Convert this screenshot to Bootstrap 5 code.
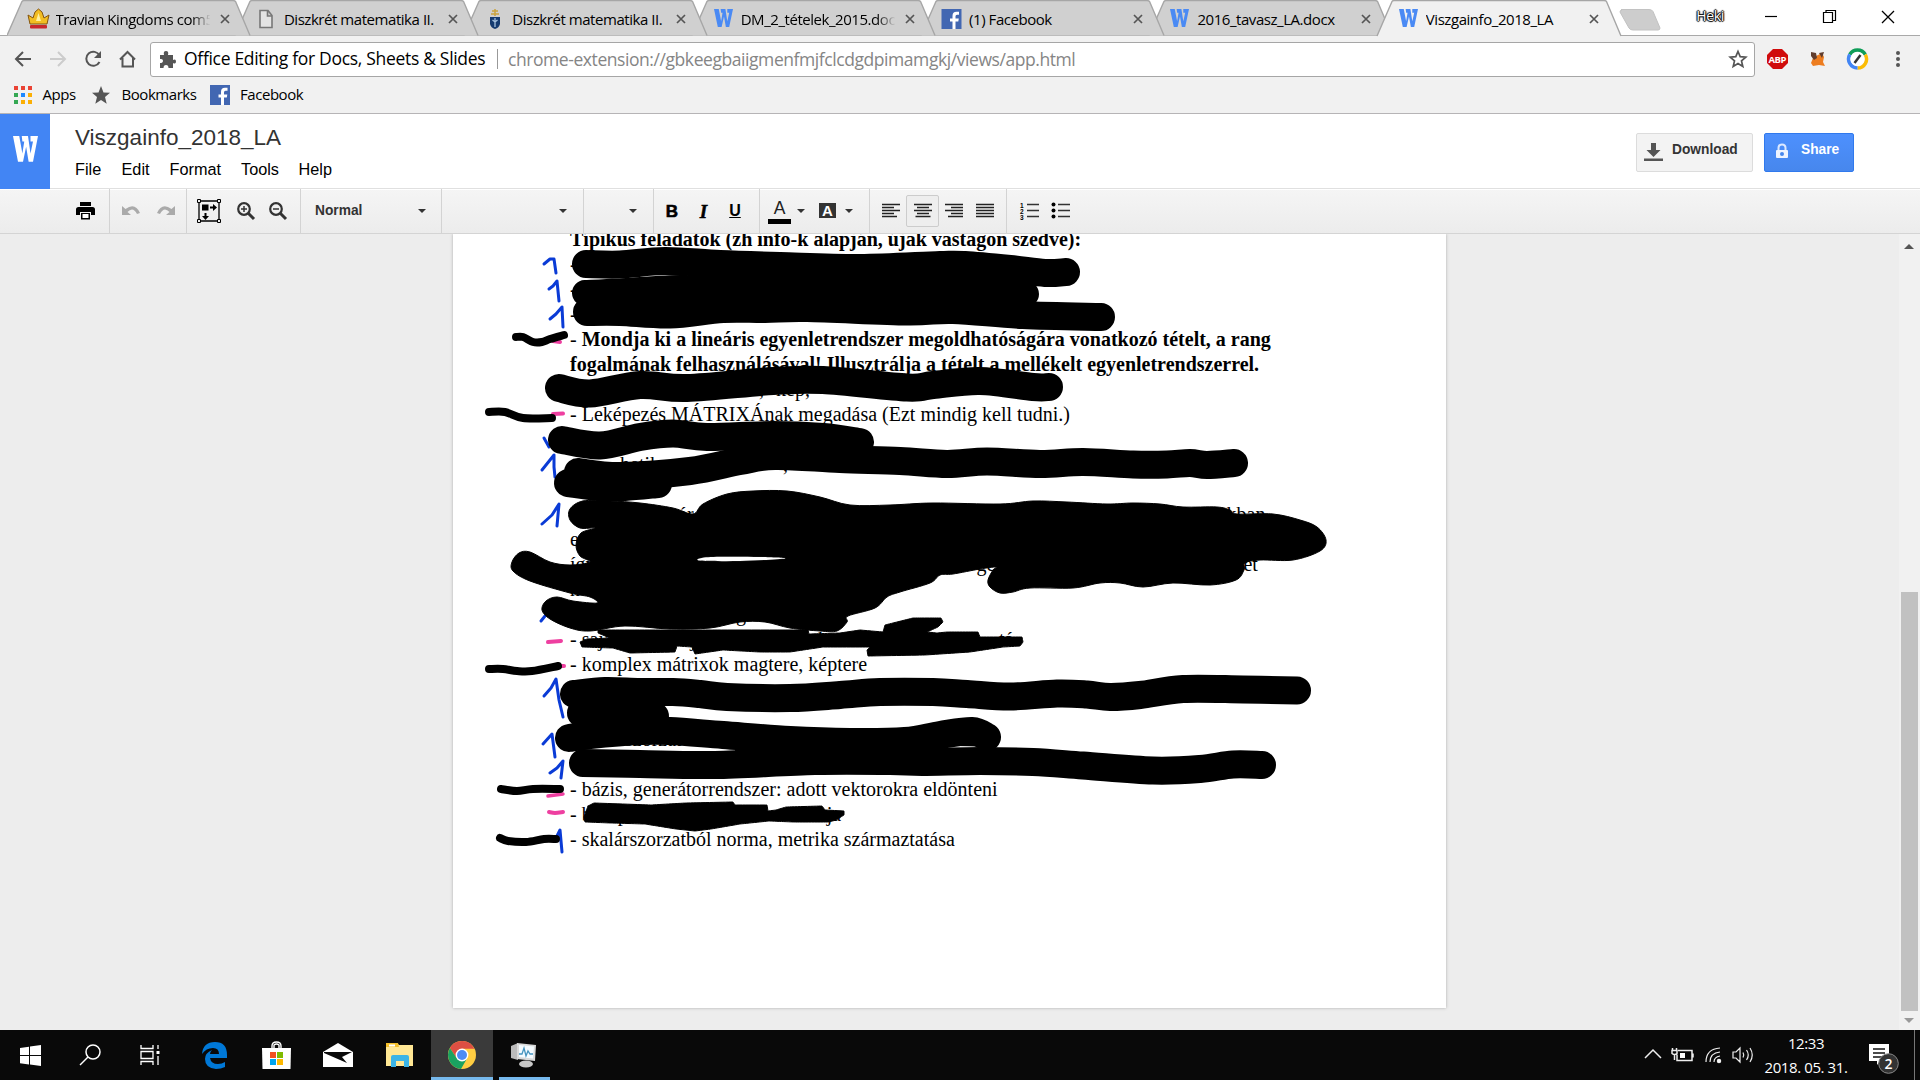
<!DOCTYPE html>
<html lang="en">
<head>
<meta charset="utf-8">
<title>Viszgainfo_2018_LA</title>
<link href="https://cdn.jsdelivr.net/npm/bootstrap@5.3.0/dist/css/bootstrap.min.css" rel="stylesheet">
<style>
html,body{height:1080px;overflow:hidden}
body{font-family:"Open Sans","Noto Sans",sans-serif;color:#000;background:#fff;line-height:1}
svg{display:block;flex:none;overflow:visible}
.tabstrip{height:36px;padding-left:7px;background:#fff;border-bottom:1px solid #a9a9a9;z-index:1}
.btab{width:244.4px;margin-right:-16px;height:36px;padding-left:20.5px;padding-top:1px;font-size:15px;letter-spacing:-.45px;flex:none}
.btab .shape{position:absolute;left:0;top:0;z-index:-1}
.btab .cap{width:156px;margin-left:7px;overflow:hidden;white-space:nowrap;line-height:24px}
.btab .fade-cap{-webkit-mask-image:linear-gradient(90deg,#000 87%,transparent 99%);mask-image:linear-gradient(90deg,#000 87%,transparent 99%)}
.btab .x{margin-left:8px}
.newtab{margin:0 0 0 13px}
.heki{font-size:14px;color:#fff;text-shadow:0 0 1px #000,1px 0 1px #000,-1px 0 1px #000,0 1px 1px #000,0 -1px 1px #000;letter-spacing:-.3px}
.wincontrols{margin-left:auto;padding:0 12px 3px 0}
.navrow{height:46px;background:#f1f1f1;padding:0 12px 0 14px}
.omni{width:1605px;height:35px;border:1px solid #a6a6a6;border-radius:3px;background:#fff;font-size:17.5px;margin-left:14px;padding:0 7px 0 8px}
.omni .o1{width:302px;margin-left:8px;letter-spacing:-.31px;white-space:nowrap}
.omni .o2{border-left:1px solid #999;padding-left:10px;margin-left:11px;color:#858585;line-height:20px;letter-spacing:-.43px;white-space:nowrap}
.marks{height:32px;background:#f1f1f1;border-bottom:1px solid #b6b4b6;font-size:15px;padding:0 0 6px 14px;letter-spacing:-.45px}
.dochead{height:74px;font-family:"Liberation Sans",Arial,sans-serif}
.logo-w{width:50px;height:75px;background:#4285f4;z-index:2;padding-top:22px;padding-left:13px}
.dtitle{font-size:22.5px;color:#333;padding:12px 0 0 25px;line-height:24px;letter-spacing:0}
.dmenu{font-size:16.25px;padding:9px 0 0 25px;line-height:20px}
.dbtn{height:39px;border-radius:2px;font-size:13.75px;font-weight:bold;margin-top:19px;border:1px solid #dcdcdc;background:#f3f3f3;color:#333;line-height:14px;padding-top:9px}
.dshare{background:linear-gradient(#4d90fe,#4787ed);border-color:#3079ed;color:#fff}
.tools{height:46px;border-top:1px solid #e0e0e0;border-bottom:1px solid #d4d4d4;background:linear-gradient(#f5f5f5,#ececec);font-family:"Liberation Sans",Arial,sans-serif;box-shadow:inset 0 1px #fff}
.tg{border-right:1px solid #d3d3d3;height:44px;flex:none}
.caret{width:0;height:0;border:4px solid transparent;border-top-color:#333;border-bottom:0;flex:none}
.ti{width:20px;flex:none;text-align:center}
.pressed{width:33px;height:32px;border:1px solid #ccc;border-radius:2px;background:#eee;margin:0 5px;padding-left:6px}
.work{height:796px;background:#ededed;overflow:hidden}
.sheet{width:993px;height:774px;margin-left:453px;background:#fff;box-shadow:0 0 3px #aaa;padding:0 0 0 117px;font:20px/25px "Liberation Serif","Times New Roman",serif;white-space:nowrap}
.sheet .txt{margin-top:-7px}
.ln{height:25px}
.ln i{display:inline-block;height:1px}
.ink{position:absolute;left:0;top:0;pointer-events:none;z-index:3}
.sbar{width:21px;height:796px;background:#f1f1f1;margin-left:auto;padding:10px 0 7px 5px}
.thumb{width:17px;height:419px;background:#c1c1c1;margin-left:-3px;margin-top:auto;margin-bottom:7px}
.taskbar{height:50px;background:#090909;color:#fff}
.tk{width:62px;height:50px;flex:none}
.tk.on{background:#3a3a3a;box-shadow:inset 0 -3px #76b9ed}
.tk.run{background:linear-gradient(#76b9ed,#76b9ed) 50% 100%/51px 3px no-repeat}
.clock{width:90px;font-size:15px;text-align:center;line-height:24px;letter-spacing:-.4px}
.showdesk{border-left:1px solid #777;width:6px;height:50px}
</style>
<script src="https://cdn.jsdelivr.net/npm/bootstrap@5.3.0/dist/js/bootstrap.bundle.min.js"></script>
</head>
<body>
<svg width="0" height="0" class="position-absolute">
<defs>
<symbol id="tabx" viewBox="0 0 10 10"><path d="M1 1l8 8M9 1l-8 8" stroke="#555" stroke-width="1.7" fill="none"/></symbol>
<symbol id="idle" viewBox="0 0 245 36"><path d="M0 35.5L15 1.5Q15.5.5 17 .5H227Q229 .5 229.5 1.5L244 35.5" fill="#d0d0d0" stroke="#a6a6a6" stroke-width="1.4"/></symbol>
<symbol id="wico" viewBox="0 0 20 20"><path d="M0 0H5L7.5 13 9 4H7.500L7 0H12L14 13 16 4H14L14 0H20L16 19H12.500L10.500 8 8 19H4Z" fill="currentColor"/></symbol>
<symbol id="fb" viewBox="0 0 20 20"><path d="M0 0h20v20H0z" fill="#4267b2"/><path d="M11 20v-7.500H8.500V9.500H11V7q0-4.200 4-4.200h2.500v3H15.500q-1.500 0-1.500 1.500v2.200h3.300l-.5 3H14V20z" fill="#fff"/></symbol>
<symbol id="loupe" viewBox="0 0 20 20"><circle cx="8" cy="8" r="5.800" fill="none" stroke="#333" stroke-width="2.200"/><path d="M12 12l6 6" stroke="#333" stroke-width="3"/><path d="M5 8h6" stroke="#333" stroke-width="1.500"/></symbol>
</defs>
</svg>

<div class="tabstrip d-flex position-relative">
  <div class="btab d-flex align-items-center position-relative"><svg class="shape" width="244" height="36"><use href="#idle"/></svg>
    <svg width="21" height="20"><path d="M2 15L0 6l5 3 2-6 3.500-3L14 3l2 6 5-3-2 9z" fill="#f2bd22" stroke="#84540f"/><path d="M8 12l2.500-8L13 12z" fill="#fff0a0"/><rect x="2" y="16" width="17" height="3.500" rx="1" fill="#c9272c"/></svg><div class="cap fade-cap">Travian Kingdoms com5</div><svg class="x" width="10" height="10"><use href="#tabx"/></svg></div>
  <div class="btab d-flex align-items-center position-relative"><svg class="shape" width="244" height="36"><use href="#idle"/></svg>
    <svg width="21" height="20"><path d="M4 1.500h8l4 5V18.500H4zM11.500 1.500v5.500h5" fill="#e4e4e4" stroke="#777" stroke-width="1.600"/></svg><div class="cap">Diszkrét matematika II.</div><svg class="x" width="10" height="10"><use href="#tabx"/></svg></div>
  <div class="btab d-flex align-items-center position-relative"><svg class="shape" width="244" height="36"><use href="#idle"/></svg>
    <svg width="21" height="20"><path d="M6 8h10v7q-1 4-5 5-4-1-5-5z" fill="#153b70"/><path d="M11 0v7M8 2h6M7 5h8" stroke="#c9a33d" stroke-width="1.500"/><path d="M11 9v9M8.500 11l2.500 2 2.500-2" stroke="#a6c2df" fill="none" stroke-width="1.300"/></svg><div class="cap">Diszkrét matematika II.</div><svg class="x" width="10" height="10"><use href="#tabx"/></svg></div>
  <div class="btab d-flex align-items-center position-relative"><svg class="shape" width="244" height="36"><use href="#idle"/></svg>
    <svg width="21" height="19" color="#4a8af4"><use href="#wico"/></svg><div class="cap fade-cap">DM_2_tételek_2015.docx</div><svg class="x" width="10" height="10"><use href="#tabx"/></svg></div>
  <div class="btab d-flex align-items-center position-relative"><svg class="shape" width="244" height="36"><use href="#idle"/></svg>
    <svg width="21" height="20"><use href="#fb"/></svg><div class="cap">(1) Facebook</div><svg class="x" width="10" height="10"><use href="#tabx"/></svg></div>
  <div class="btab d-flex align-items-center position-relative"><svg class="shape" width="244" height="36"><use href="#idle"/></svg>
    <svg width="21" height="19" color="#4a8af4"><use href="#wico"/></svg><div class="cap">2016_tavasz_LA.docx</div><svg class="x" width="10" height="10"><use href="#tabx"/></svg></div>
  <div class="btab d-flex align-items-center position-relative"><svg class="shape" width="244" height="36"><path d="M0 36L15 1.500Q15.500.5 17 .5H227Q229 .5 229.500 1.500L244 36" fill="#f1f1f1" stroke="#a6a6a6" stroke-width="1.400"/></svg>
    <svg width="21" height="19" color="#4a8af4"><use href="#wico"/></svg><div class="cap">Viszgainfo_2018_LA</div><svg class="x" width="10" height="10" style="margin-left:7px"><use href="#tabx"/></svg></div>
  <svg class="newtab" width="44" height="36"><path d="M2 9.500H30q3 0 4 2L41 28q0 2-2 2H14q-3 0-4-2L1 12q0-2 2-2z" fill="#cdcdcd" stroke="#c2c2c2"/></svg>
  <div class="wincontrols d-flex align-items-center"><span class="heki">Heki</span>
    <svg width="160" height="20" class="ms-4"><path d="M17 10.500h12" stroke="#000" stroke-width="1.200"/><path d="M75.500 6.500h9v10h-9zM78 6V4.500h9.500v10H85" fill="none" stroke="#000" stroke-width="1.200"/><path d="M134 5l12 12M146 5l-12 12" stroke="#000" stroke-width="1.300"/></svg></div>
</div>

<div class="navrow d-flex align-items-center">
  <svg width="122" height="20" fill="none" stroke="#555" stroke-width="2"><path d="M17 10H2M9 3l-7 7 7 7"/><path d="M36 10h15M44 3l7 7-7 7" stroke="#ccc"/><path d="M85.500 6.500A7 7 0 1 0 85.500 13"/><path d="M87 2v7h-7z" fill="#555" stroke="none"/><path d="M106 10.500l7.500-7.500L121 10.500M108.500 9v8.500h10.500V9" /></svg>
  <div class="omni d-flex align-items-center">
    <svg width="17" height="17" fill="#555"><path d="M1 4h4q-1-4 2-4t2 4h5v5q3-1.500 3 1.500T14 12v5H9.500q0-3-2.500-3t-2.500 3H1v-5q3 0 3-2.300T1 8z"/></svg>
    <div class="o1">Office Editing for Docs, Sheets &amp; Slides</div>
    <div class="o2">chrome-extension://gbkeegbaiigmenfmjfclcdgdpimamgkj/views/app.html</div>
    <svg class="ms-auto" width="18" height="18"><path d="M9 1.500l2.200 5.200 5.600.5-4.300 3.700 1.300 5.600L9 13.500l-4.800 3 1.300-5.600L1.200 7.200l5.600-.5z" fill="none" stroke="#555" stroke-width="1.700"/></svg>
  </div>
  <svg class="ms-auto" width="142" height="22">
    <path d="M7 1h9l6 6v8l-6 6H7l-6-6V7z" fill="#d00c0c"/><text x="2.500" y="14.500" font-size="9.500" font-weight="700" fill="#fff" font-family="Open Sans" textLength="18">ABP</text>
    <path d="M46 5l4 3 6-3 2 4-1 5 2 4-6-1-6 1-2-3 2-5z" fill="#ed7d20"/><path d="M45 4l5 1 1 5-3 2-3-4zM53 5l5-1-2 6z" fill="#613d2d"/>
    <g transform="translate(10.500)"><g fill="none" stroke-width="3.500"><path d="M73.300 6.500a9 9 0 0 1 15.500 0" stroke="#0f9d58"/><path d="M88.800 6.500a9 9 0 0 1-7.800 13.500" stroke="#fbbc05"/><path d="M81 20a9 9 0 0 1-7.700-13.500" stroke="#4285f4"/></g><circle cx="81" cy="11" r="7" fill="#fff"/><path d="M78 15l6-8" stroke="#333" stroke-width="2.500"/></g>
    <g fill="#555"><circle cx="132" cy="5" r="2"/><circle cx="132" cy="11" r="2"/><circle cx="132" cy="17" r="2"/></g>
  </svg>
</div>
<div class="marks d-flex align-items-center">
  <svg width="18" height="18"><g fill="#ea4335"><path d="M0 0h4v4H0zM7 0h4v4H7zM14 0h4v4h-4z"/></g><path d="M0 7h4v4H0zM0 14h4v4H0z" fill="#34a853"/><path d="M7 7h4v4H7z" fill="#1e88ff"/><path d="M14 7h4v4h-4zM7 14h4v4H7zM14 14h4v4h-4z" fill="#fbaf05"/></svg>
  <span style="width:60px;padding-left:10.500px">Apps</span>
  <svg width="18" height="18"><path d="M9 0l2.500 6.400 6.500.4-5 4.300 1.700 6.700L9 14l-5.700 3.800L5 11.100 0 6.800l6.500-.4z" fill="#555"/></svg>
  <span style="width:100px;padding-left:11.500px">Bookmarks</span>
  <svg width="20" height="20"><use href="#fb"/></svg><span style="padding-left:10px">Facebook</span>
</div>

<div class="dochead d-flex">
  <div class="logo-w position-relative text-white"><svg width="25" height="27" viewBox="0 0 20 20" preserveAspectRatio="none"><path d="M0 0H5L7.500 13 9 4H7.500L7 0H12L14 13 16 4H14L14 0H20L16 19H12.500L10.500 8 8 19H4Z" fill="#fff"/></svg></div>
  <div><div class="dtitle">Viszgainfo_2018_LA</div>
    <div class="dmenu d-flex"><span style="width:46.500px">File</span><span style="width:48px">Edit</span><span style="width:71.500px">Format</span><span style="width:57.500px">Tools</span><span>Help</span></div></div>
  <div class="dbtn d-flex align-items-start ms-auto" style="width:117px"><svg width="20" height="19" style="margin-left:6px"><path d="M8 0h5v7h4.500l-7 7-7-7H8zM1 15.500h19V18H1z" fill="#555"/></svg><span style="padding-left:9px">Download</span></div>
  <div class="dbtn dshare d-flex align-items-start" style="width:90px;margin-left:11px;margin-right:66px"><svg width="14" height="17" style="margin-left:10px"><path d="M3.500 8V5q0-3.500 3.500-3.500T10.500 5v3" fill="none" stroke="#dce8ff" stroke-width="2"/><rect x="1" y="7" width="12" height="8" rx="1" fill="#eef4ff"/><circle cx="7" cy="11" r="2" fill="#4787ed"/></svg><span style="padding-left:12px">Share</span></div>
</div>

<div class="tools d-flex position-relative">
  <div class="tg d-flex align-items-center" style="width:110px;padding-left:76px"><svg width="19" height="18"><path d="M4 0h11v4H4zM2.500 5h14q2.500 0 2.500 2.500V13h-4v-3H4v3H0V7.500Q0 5 2.500 5zM5 11h9v6.500H5z" fill="#000"/><path d="M6.500 12h6v4h-6z" fill="#fff"/></svg></div>
  <div class="tg d-flex align-items-center" style="width:77px;padding-left:11px;gap:15px"><svg width="20" height="12"><path d="M1 1v9h9L6.500 7Q12 1 16 9l3-1Q14-3 4.500 4z" fill="#aaa"/></svg><svg width="20" height="12"><path d="M19 1v9h-9L13.500 7Q8 1 4 9L1 8Q6-3 15.500 4z" fill="#aaa"/></svg></div>
  <div class="tg d-flex align-items-center" style="width:114px;padding-left:10px;gap:12px"><svg width="24" height="24"><path d="M2 2h20v20H2z" fill="none" stroke="#000" stroke-width="1.300"/><g fill="#eee" stroke="#000"><path d="M.5.5h3v3h-3zM20.500.5h3v3h-3zM.5 20.500h3v3h-3zM20.500 20.500h3v3h-3z"/></g><path d="M5 5.500h6.500v6H5zM13 7.500h3V5l4 3.500-4 3.500V9.500h-3zM7.500 14h2v3H12l-3.500 4L5 17h2.500z"/></svg><svg width="20" height="20" style="margin-left:3px"><use href="#loupe"/><path d="M8 5v6" stroke="#333" stroke-width="1.500"/></svg><svg width="20" height="20"><use href="#loupe"/></svg></div>
  <div class="tg d-flex align-items-center justify-content-between fw-bold" style="width:141px;padding:0 15.500px 0 14px;font-size:13.750px;color:#333"><span>Normal</span><span class="caret"></span></div>
  <div class="tg d-flex align-items-center justify-content-end" style="width:142px;padding-right:16px"><span class="caret"></span></div>
  <div class="tg d-flex align-items-center justify-content-end" style="width:70px;padding-right:16px"><span class="caret"></span></div>
  <div class="tg d-flex align-items-center" style="width:106px;padding-left:8px;gap:11.500px;font-size:17px"><b class="ti" style="-webkit-text-stroke:.6px #000">B</b><b class="ti fst-italic" style="font-family:'Liberation Serif',serif;font-size:19px;-webkit-text-stroke:.5px #000">I</b><b class="ti text-decoration-underline" style="font-size:16px">U</b></div>
  <div class="tg d-flex align-items-center" style="width:110px;padding-left:8px"><span class="text-center" style="width:23px;height:25px;border-bottom:5px solid #000;font-size:17.500px;line-height:19px;color:#222">A</span><span class="caret" style="margin-left:6px"></span><span class="text-center text-white" style="width:17px;height:15px;background:#333;margin:0 9px 2px 14px;font-size:15px;line-height:15px;font-weight:bold">A</span><span class="caret"></span></div>
  <div class="tg d-flex align-items-center" style="width:137px;padding-left:11px"><svg width="20" height="16" stroke="#222" stroke-width="1.600"><path d="M1 1.500h18M1 4.500h12M1 7.500h18M1 10.500h12M1 13.500h15"/></svg><span class="pressed d-flex align-items-center"><svg width="20" height="16" stroke="#222" stroke-width="1.600"><path d="M1 1.500h18M4 4.500h12M1 7.500h18M4 10.500h12M2.500 13.500h15"/></svg></span><svg width="20" height="16" stroke="#222" stroke-width="1.600"><path d="M1 1.500h18M7 4.500h12M1 7.500h18M7 10.500h12M4 13.500h15"/></svg><svg width="20" height="16" style="margin-left:11px" stroke="#222" stroke-width="1.600"><path d="M1 1.500h18M1 4.500h18M1 7.500h18M1 10.500h18M1 13.500h18"/></svg></div>
  <div class="d-flex align-items-center" style="padding-left:13px;gap:11px"><svg width="20" height="18"><path d="M7 2.500h12M7 8.500h12M7 14.500h12" stroke="#333" stroke-width="1.600"/><g font-size="6.500" font-weight="700" font-family="Liberation Sans"><text x="0" y="5.500">1</text><text x="0" y="11.500">2</text><text x="0" y="17.500">3</text></g></svg><svg width="20" height="18"><path d="M7 2.500h12M7 8.500h12M7 14.500h12" stroke="#333" stroke-width="1.600"/><circle cx="2.500" cy="2.500" r="2"/><circle cx="2.500" cy="8.500" r="2"/><circle cx="2.500" cy="14.500" r="2"/></svg></div>
</div>

<div class="work d-flex">
  <div class="sheet"><div class="txt">
    <div class="ln fw-bold">Típikus feladatok (zh info-k alapján, újak vastagon szedve):</div>
    <div class="ln">-</div><div class="ln">-</div><div class="ln">-</div>
    <div class="ln fw-bold"><span class="fw-normal">-</span> Mondja ki a lineáris egyenletrendszer megoldhatóságára vonatkozó tételt, a rang</div>
    <div class="ln fw-bold">fogalmának felhasználásával! Illusztrálja a tételt a mellékelt egyenletrendszerrel.</div>
    <div class="ln"><i style="width:189px"></i>, <i style="width:7px"></i>kép, <i style="width:120px"></i></div>
    <div class="ln">- Leképezés MÁTRIXÁnak megadása (Ezt mindig kell tudni.)</div>
    <div class="ln"></div>
    <div class="ln"><i style="width:50px"></i>hetik <i style="width:118px"></i>,</div>
    <div class="ln"></div>
    <div class="ln"><i style="width:108px"></i>ár<i style="width:533px"></i>kban</div>
    <div class="ln">e</div>
    <div class="ln">így<i style="width:381px"></i>ge<i style="width:248px"></i>et</div>
    <div class="ln">n</div>
    <div class="ln"><i style="width:166px"></i>g</div>
    <div class="ln">- saját<i style="width:72px"></i>j<i style="width:122px"></i>k<i style="width:45px"></i>mpl<i style="width:95px"></i>tá</div>
    <div class="ln">- komplex mátrixok magtere, képtere</div>
    <div class="ln"></div><div class="ln"></div>
    <div class="ln"><i style="width:55px"></i>szorzat</div>
    <div class="ln"></div>
    <div class="ln">- bázis, generátorrendszer: adott vektorokra eldönteni</div>
    <div class="ln">- b<i style="width:26px"></i>p<i style="width:52px"></i>g<i style="width:137px"></i>ja</div>
    <div class="ln">- skalárszorzatból norma, metrika származtatása</div>
  </div></div>
  <div class="sbar d-flex flex-column"><svg width="10" height="5"><path d="M0 5l5-5 5 5z" fill="#555"/></svg><div class="thumb"></div><svg width="10" height="5"><path d="M0 0l5 5 5-5z" fill="#999"/></svg></div>
</div>

<svg class="ink" id="ink" width="1920" height="1029" stroke-linecap="round" stroke-linejoin="round"></svg>

<div class="taskbar d-flex align-items-center">
  <div class="tk d-flex align-items-center justify-content-center" style="width:60px"><svg width="21" height="21" fill="#fff"><path d="M0 3l9-1.300V10H0zM10 1.500L21 0v10H10zM0 11h9v8.500L0 18.200zM10 11h11v10l-11-1.500z"/></svg></div>
  <div class="tk d-flex align-items-center justify-content-center"><svg width="22" height="22" fill="none" stroke="#fff" stroke-width="1.500"><circle cx="13" cy="8" r="7"/><path d="M8 13l-8 8"/></svg></div>
  <div class="tk d-flex align-items-center justify-content-center" style="width:56px"><svg width="20" height="20" fill="none" stroke="#fff" stroke-width="1.300"><path d="M1 0v3.500h12V0M1 20v-3.500h12V20M1 6.500h12v7H1zM18 0v4M18 11v9"/><path d="M16.500 6h3v3h-3z" fill="#fff" stroke="none"/></svg></div>
  <div class="tk d-flex align-items-center justify-content-center" style="margin-left:5px"><svg width="25" height="27"><path d="M0 12Q1 0 13 0 25 0 25 13v3H8q1 6 8 6 4 0 7-2v5q-4 2-9 2Q3 26 3 17q0-6 7-9-2 2-2 4h9q0-6-6-6Q4 6 0 12z" fill="#0078d7"/></svg></div>
  <div class="tk d-flex align-items-center justify-content-center"><svg width="29" height="28"><path d="M10 8V5q0-4 4.500-4T19 5v3M12 8V4q2.500-2 5 0v4" fill="none" stroke="#fff" stroke-width="1.400"/><path d="M0 7h29l-.5 21H.5z" fill="#fff"/><path d="M8 11h6v6H8z" fill="#f25022"/><path d="M15 11h6v6h-6z" fill="#7fba00"/><path d="M8 18h6v6H8z" fill="#00a4ef"/><path d="M15 18h6v6h-6z" fill="#ffb900"/></svg></div>
  <div class="tk d-flex align-items-center justify-content-center"><svg width="30" height="24"><path d="M0 9L15 0l15 9v15H0z" fill="#fff"/><path d="M1 9h28l-10 5 5 6L1 10z" fill="#090909"/></svg></div>
  <div class="tk d-flex align-items-center justify-content-center"><svg width="28" height="24"><path d="M0 1q0-1 1-1h10l2 2h14v21H0z" fill="#ffe794"/><path d="M0 0h12l1 4H0z" fill="#f4bf2a"/><path d="M3 1.500h6v2H3z" fill="#fff"/><path d="M5 24V14q0-2 2-2h14q2 0 2 2v10h-5v-6h-8v6z" fill="#3bb4e6"/></svg></div>
  <div class="tk on d-flex align-items-center justify-content-center"><svg width="28" height="28" viewBox="-14 -14 28 28"><circle r="14" fill="#ffcd42"/><path d="M-12.100-7A14 14 0 0 1 12.500-6.200H0L-5.400 3z" fill="#dd4f43"/><path d="M-12.100-7A14 14 0 0 0-1 14L5 3.500 0 6-5.400 3z" fill="#1aa260"/><circle r="6.400" fill="#fff"/><circle r="5" fill="#4c8bf5"/></svg></div>
  <div class="tk run d-flex align-items-center justify-content-center"><svg width="28" height="26"><path d="M1 4l7-3v17l-7-2z" fill="#bbb"/><path d="M7 1l19 2-1 16-18-2z" fill="#d9d9d9"/><path d="M9 3l15 1.500-1 12L9 15z" fill="#f5fbff"/><path d="M9 12h3l2-6 2 8 2-5 2 3h3" fill="none" stroke="#4594bf" stroke-width="1.300"/><ellipse cx="16" cy="22" rx="7" ry="3.500" fill="#c9c9c9"/></svg></div>
  <svg class="ms-auto" width="110" height="22" fill="none" stroke="#eee" stroke-width="1.500"><path d="M1 14l8-8 8 8"/><path d="M34 6.500h14v10H33v-6M49 9.500v4M28.500 4v2M32.500 4v2M28 6.500h5v3q-2.500 2-5 0zM30.500 11v5"/><path d="M36 9h5v5h-5z" fill="#fff" stroke="none"/><path d="M62 18q0-13 14-14M66 18q0-9 10-10M70 18q0-5 6-6" stroke-width="1.200"/><circle cx="75" cy="17" r="1.500" fill="#fff"/><path d="M89 8h3l4-4v14l-4-4h-3zM99 8.500q1.500 2.500 0 5M102.500 6q3.500 5 0 10M106 4q4.500 7 0 14" stroke-width="1.200"/></svg>
  <div class="clock" style="margin-left:7px"><div>12:33</div><div>2018. 05. 31.</div></div>
  <svg width="31" height="31" style="margin:5px 14px 0 18px"><path d="M0 2h20v17h-9l-3 4v-4H0z" fill="#fff"/><path d="M4 7h12M4 11h12M4 15h12" stroke="#111" stroke-width="1.300"/><circle cx="19.500" cy="21.500" r="9.800" fill="#333" stroke="#888"/><text x="15.500" y="27" font-size="14" font-weight="600" fill="#fff">2</text></svg>
  <div class="showdesk"></div>
</div>

<script>
// Freehand pen strokes over the sheet: [colour, width, filled, points]
const K='#000',B='#0a3bd6',P='#ee3fa0';
const strokes=[
[K,28,0,'586,264 620,264.500 665,261 720,264 780,266 860,268 940,265 965,265 1010,269 1045,273 1066,272'],
[K,26,0,'585,293 620,291.500 680,288 780,290 900,292 1026,294'],
[K,14,0,'695,279 780,280 900,281 1020,283'],
[K,16,0,'590,302 800,300 1022,303'],
[K,28,0,'587,312 620,312 670,314.500 723,309 765,309 807,308 907,311.500 953,310 1023,315 1101,317'],
[K,28,0,'559,388 590,393.500 640,385 687,388 773,381 823,380 907,387.500 933,385 980,381 1033,387 1049,387'],
[K,28,0,'562,440 600,445.500 640,437 673,433.500 707,437 773,435 823,437 860,442'],
[K,28,0,'578,472 620,476 690,471 740,461 775,456 840,459 900,461 947,464 987,461.500 1040,464 1083,462 1133,464.500 1167,464.500 1190,463 1207,465 1234,463'],
[K,28,0,'568,483 600,487 625,487 658,484'],
[K,1,1,'583,501 610,501 640,503 673,508 693,514 703,504 727,494 753,491 787,491 820,497 850,505 890,505 933,503 1000,504 1033,501 1067,502 1107,504 1133,503 1160,504 1183,507 1217,507 1230,510 1237,514 1273,514 1300,520 1317,527 1326,540 1320,551 1293,560 1260,560 1245,563 1244,570 1236,580 1210,585 1173,583 1143,587 1120,583 1100,583 1073,588 1030,588 1013,592 1000,593 990,587 988,580 993,570 996,567 980,569 953,574 940,575 930,583 900,592 887,597 875,608 848,616 847,622 837,631 820,631 790,628 765,622 740,622 710,628 670,629 625,626 590,631 570,628 550,619 542,610 546,601 557,597 573,601 597,603 590,597 570,593 530,581 513,571 512,562 519,553 530,552 550,562 570,565 590,562 580,556 576,545 581,533 595,528 580,528 570,520 570,509'],
['#fff',.1,1,'700,560.500 704,557.500 727,556.700 760,557 785,558.500 740,561'],
[K,1,2,'598,630 713,630 808,630 809,634 840,633 860,630 883,632 885,625 913,618 941,618 943,622 938,627 927,632 937,633 947,632 978,632 980,637 1022,637 1023,642 1020,646 1003,647 970,652 925,655 868,656 867,650 870,647 823,647 790,652 760,652 723,650 695,654 692,647 677,646 675,652 630,653 613,648 582,647 580,642 587,639 610,638 598,633'],
[K,28,0,'574,694 605,691 640,692 673,692 700,694 727,697 790,698 840,695 880,692 933,692 967,694 1010,696.500 1057,693.500 1087,694.500 1110,697 1140,695 1183,689 1243,689.500 1297,690.500'],
[K,28,0,'581,713 620,714 655,716'],
[K,28,0,'569,738 590,735 640,731 670,731 723,735 790,740 850,742 905,741 940,735 972,731 987,737'],
[K,10,0,'740,750 900,749'],[K,6,0,'880,746 950,743 992,744'],
[K,28,0,'583,763 640,764 715,765 815,761 890,761 922,762 980,761 1033,762 1083,765.500 1153,770.500 1200,769 1233,764.500 1262,765'],
[K,1,2,'588,806 594,803 651,805 686,803 733,802 735,805 767,805 768,811 776,810 786,807 822,806 825,810 844,811 844,815 836,820 829,822 794,822 769,821 740,824 711,829 695,831 676,829 645,824 611,823 585,822 584,817'],
[P,4,0,'553,341 560,342'],[P,4,0,'553,414 563,413.500'],[P,4,0,'548,642 561,641'],[P,4,0,'556,666 564,666'],[P,3.500,0,'548,796 563,794'],[P,4,0,'549,812 555,813 563,812'],
[B,3,0,'544,264 550,259 554,259 556,273'],[B,3,0,'549,289 553,286 557,281 558,291 559,301'],[B,3,0,'550,319 556,314 562,307 563,327'],[B,3,0,'544,438 549,447'],[B,3,0,'542,470 554,455 554,467 555,477'],[B,3,0,'542,524 552,515 559,504 557,526'],[B,3,0,'541,621 545,616'],[B,3,0,'544,696 551,688 556,679 559,700 563,717'],[B,3,0,'543,744 552,734 555,757'],[B,3,0,'550,773 557,768 563,761 561,778'],[B,3,0,'557,836 560,830 562,852'],
[K,8,0,'516,337 523,337 533,342 542,342 550,339 564,335'],[K,8,0,'489,412 505,412 523,418 552,418'],[K,8,0,'489,669 503,669 517,671 532,671 558,666'],[K,8,0,'501,789 517,791 533,789 560,789'],[K,8,0,'500,838 508,841 526,842 544,839 556,839']];
const order=[...strokes.filter(s=>s[0]===B||s[0]===P),...strokes.filter(s=>s[0]!==B&&s[0]!==P)];
let out='';
for(const [c,w,f,s] of order){
  const p=s.split(' ').map(q=>q.split(',').map(Number)),n=p.length;
  const g=i=>f?p[(i+n)%n]:p[Math.max(0,Math.min(n-1,i))];
  let d='M'+p[0];
  for(let i=0;i<(f?n:n-1);i++){
    const a=g(i-1),b=g(i),e=g(i+1),h=g(i+2),t=f===2||c===B?0:1/6;
    d+=`C${b[0]+(e[0]-a[0])*t},${b[1]+(e[1]-a[1])*t} ${e[0]-(h[0]-b[0])*t},${e[1]-(h[1]-b[1])*t} ${e[0]},${e[1]}`;
  }
  out+=`<path d="${d}" fill="${f?c:'none'}" stroke="${c}" stroke-width="${w}"/>`;
}
document.getElementById('ink').innerHTML=out;
// Each idle tab overlaps the one to its right; the active tab is on top
document.querySelectorAll('.btab').forEach((t,i)=>t.style.zIndex=i===6?20:10-i);
</script>
</body>
</html>
